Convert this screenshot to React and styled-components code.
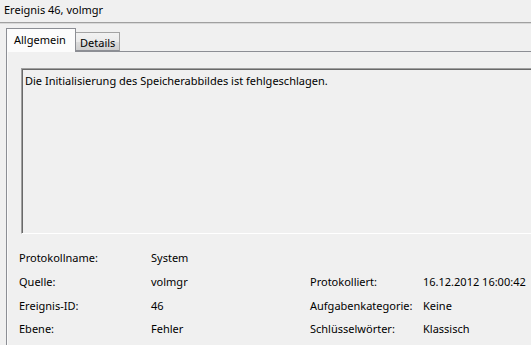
import React from 'react';
import styled, { createGlobalStyle } from 'styled-components';

const GlobalStyle = createGlobalStyle`
  html, body {
    margin: 0;
    padding: 0;
    background: #f0f0f0;
    overflow: hidden;
  }
  body {
    font-family: "Segoe UI", "Noto Sans", "Liberation Sans", sans-serif;
    font-size: 11px;
    color: #000;
  }
`;

const Window = styled.div`
  width: 531px;
  height: 345px;
  overflow: hidden;
  background: #f0f0f0;
`;

const TitleBar = styled.div`
  height: 22px;
  line-height: 20px;
  padding-left: 4px;
  border-bottom: 1px solid #a0a0a0;
  box-shadow: 0 1px 0 #d8d8d8;
  white-space: nowrap;
`;

const Body = styled.div`
  padding: 5px 0 0 6px;
`;

const TabStrip = styled.div`
  display: flex;
  align-items: flex-end;
  height: 23px;
  position: relative;
  z-index: 1;
`;

const Tab = styled.div`
  box-sizing: border-box;
  width: ${({ active }) => (active ? '70px' : '45px')};
  height: ${({ active }) => (active ? '24px' : '19px')};
  margin-bottom: ${({ active }) => (active ? '-1px' : '0')};
  padding-left: ${({ active }) => (active ? '7px' : '4px')};
  padding-top: ${({ active }) => (active ? '2px' : '1px')};
  margin-left: ${({ active }) => (active ? '0' : '-1px')};
  border: 1px solid ${({ active }) => (active ? '#8c8e94' : '#a3a3a3')};
  border-bottom: ${({ active }) => (active ? 'none' : '1px solid #8c8e94')};
  background: ${({ active }) => (active ? '#fcfcfc' : 'linear-gradient(#f2f2f2, #ebebeb 50%, #dddddd 51%, #cfcfcf)')};
  line-height: 17px;
  white-space: nowrap;
  ${({ active }) => (active ? 'z-index: 2;' : '')}
`;

const Panel = styled.div`
  border-top: 1px solid #8c8e94;
  border-left: 1px solid #8c8e94;
  box-shadow: inset 1px 0 0 #fafafa;
  padding: 16px 0 0 14px;
  height: 320px;
`;

const MessageBox = styled.div`
  box-sizing: border-box;
  width: 560px;
  height: 166px;
  border-top: 1px solid #a0a0a0;
  border-left: 1px solid #a0a0a0;
  border-bottom: 1px solid #ffffff;
  box-shadow: inset 1px 1px 0 #696969;
  padding: 4px 0 0 3px;
  line-height: 15px;
  white-space: nowrap;
`;

const InfoGrid = styled.div`
  display: grid;
  grid-template-columns: 132px 159px 113px auto;
  grid-auto-rows: 23.7px;
  margin: 12px 0 0 -2px;
  align-items: center;
  white-space: nowrap;
`;

const Label = styled.div``;

const Value = styled.div``;

const rows = [
  ['Protokollname:', 'System', '', ''],
  ['Quelle:', 'volmgr', 'Protokolliert:', '16.12.2012 16:00:42'],
  ['Ereignis-ID:', '46', 'Aufgabenkategorie:', 'Keine'],
  ['Ebene:', 'Fehler', 'Schlüsselwörter:', 'Klassisch'],
];

const App = () => (
  <Window>
    <GlobalStyle />
    <TitleBar>Ereignis 46, volmgr</TitleBar>
    <Body>
      <TabStrip>
        <Tab active>Allgemein</Tab>
        <Tab>Details</Tab>
      </TabStrip>
      <Panel>
        <MessageBox>Die Initialisierung des Speicherabbildes ist fehlgeschlagen.</MessageBox>
        <InfoGrid>
          {rows.map(([l1, v1, l2, v2]) => (
            <React.Fragment key={l1}>
              <Label>{l1}</Label>
              <Value>{v1}</Value>
              <Label>{l2}</Label>
              <Value>{v2}</Value>
            </React.Fragment>
          ))}
        </InfoGrid>
      </Panel>
    </Body>
  </Window>
);

export default App;
